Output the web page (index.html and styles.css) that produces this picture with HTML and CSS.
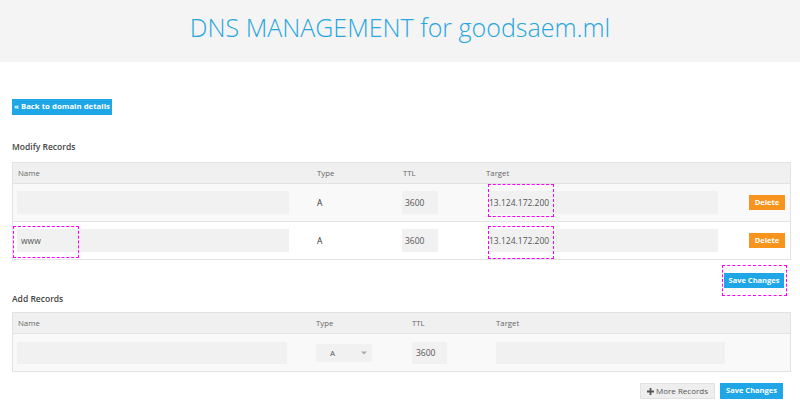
FILE: index.html
```html
<!DOCTYPE html>
<html>
<head>
<meta charset="utf-8">
<link rel="stylesheet" href="styles.css">
</head>
<body>
<header class="top">
  <h1 class="title">DNS MANAGEMENT for goodsaem.ml</h1>
</header>
<main class="main">
  <a class="btn btn-blue btn-back">« Back to domain details</a>

  <h2 class="section">Modify Records</h2>
  <div class="table t1">
    <div class="row head">
      <div class="cell">Name</div>
      <div class="cell">Type</div>
      <div class="cell">TTL</div>
      <div class="cell c-target">Target</div>
      <div class="cell"></div>
    </div>
    <div class="row odd">
      <div class="cell c-name"><span class="input in-name"></span></div>
      <div class="cell c-type">A</div>
      <div class="cell c-ttl"><span class="input in-ttl">3600</span></div>
      <div class="cell c-tin"><span class="input in-target">13.124.172.200</span><span class="mark mark-t1"></span></div>
      <div class="cell c-act"><a class="btn btn-orange">Delete</a></div>
    </div>
    <div class="row">
      <div class="cell c-name"><span class="input in-name">www</span><span class="mark mark-www"></span></div>
      <div class="cell c-type">A</div>
      <div class="cell c-ttl"><span class="input in-ttl">3600</span></div>
      <div class="cell c-tin"><span class="input in-target">13.124.172.200</span><span class="mark mark-t2"></span></div>
      <div class="cell c-act"><a class="btn btn-orange">Delete</a></div>
    </div>
  </div>
  <div class="save-row">
    <span class="save-wrap"><a class="btn btn-blue btn-save">Save Changes</a><span class="mark mark-save"></span></span>
  </div>

  <h2 class="section section-add">Add Records</h2>
  <div class="table t2">
    <div class="row head">
      <div class="cell">Name</div>
      <div class="cell">Type</div>
      <div class="cell">TTL</div>
      <div class="cell">Target</div>
    </div>
    <div class="row odd">
      <div class="cell c-name"><span class="input in-name2"></span></div>
      <div class="cell c-sel"><span class="select"><span>A</span><svg class="caret" width="6" height="4" viewBox="0 0 6 4"><path d="M0 0.5h6L3 3.5z" fill="#aaa"/></svg></span></div>
      <div class="cell c-ttl2"><span class="input in-ttl2">3600</span></div>
      <div class="cell c-ttl2"><span class="input in-target2"></span></div>
    </div>
  </div>
  <div class="bottom">
    <a class="btn btn-gray"><svg class="plus" width="7" height="7" viewBox="0 0 7 7"><path d="M2.6 0h1.8v2.6H7v1.8H4.4V7H2.6V4.4H0V2.6h2.6z" fill="#555"/></svg>More Records</a>
    <a class="btn btn-blue btn-save2">Save Changes</a>
  </div>
</main>
</body>
</html>
```

FILE: styles.css
```css
* { box-sizing: border-box; }
body {
  margin: 0;
  font-family: "Open Sans", "Liberation Sans", sans-serif;
  color: #444;
  background: #fff;
}
.top {
  height: 62px;
  background: #f4f4f4;
  display: flex;
  align-items: center;
  justify-content: center;
}
.title {
  margin: 0 0 8px;
  font-weight: 300;
  font-size: 25px;
  color: #27a6df;
  letter-spacing: 0;
}
.main {
  padding: 37px 9px 0 12px;
}
.btn {
  display: inline-flex;
  align-items: center;
  justify-content: center;
  font-size: 7.5px;
  font-weight: 700;
  color: #fff;
  line-height: 1;
  white-space: nowrap;
}
.btn-blue { background: #1ea6e6; }
.btn-orange { background: #f7941d; width: 36px; height: 15px; }
.btn-back { display: flex; width: 100px; height: 16px; font-size: 7.8px; }
.section {
  margin: 25px 0 8px;
  font-size: 8.5px;
  font-weight: 600;
  line-height: 14px;
  color: #444;
}
.section-add { margin: 4px 0 6px; }
.table {
  border: 1px solid #e3e3e3;
  width: 779px;
}
.row {
  display: grid;
  height: 38px;
  border-top: 1px solid #e3e3e3;
  align-items: center;
  background: #fff;
}
.row.head {
  height: 20px;
  border-top: 0;
  background: #f0f0f0;
  font-size: 7.8px;
  color: #666;
}
.row.odd { background: #f9f9f9; }
.t1 .row { grid-template-columns: 299px 86px 83px 240px 1fr; }
.t2 .row { grid-template-columns: 298px 96px 84px 1fr; }
.cell {
  padding-left: 5px;
  position: relative;
  height: 100%;
  display: flex;
  align-items: center;
}
.c-name { padding-left: 4px; }
.c-type { font-size: 8.5px; color: #333; }
.c-ttl { padding-left: 4px; }
.c-tin { padding-left: 7px; }
.c-act { justify-content: flex-end; padding-right: 5px; }
.input {
  display: flex;
  align-items: center;
  height: 23px;
  background: #f1f1f1;
  font-size: 8.5px;
  color: #555;
  padding-left: 4px;
}
.in-name { width: 272px; }
.in-ttl { width: 36px; padding-left: 3px; }
.in-target { width: 230px; padding-left: 1px; }
.in-name2 { width: 270px; height: 22px; }
.in-ttl2 { width: 35px; height: 22px; }
.in-target2 { width: 229px; height: 22px; }
.select {
  display: flex;
  align-items: center;
  width: 56px;
  height: 18px;
  background: #f1f1f1;
  font-size: 8px;
  color: #555;
  padding-left: 14px;
}
.caret { margin-left: 26px; }
.save-row {
  display: flex;
  justify-content: flex-end;
  padding-right: 7px;
  margin-top: 13px;
}
.save-wrap { position: relative; display: inline-flex; }
.btn-save { width: 60px; height: 15px; }
.mark {
  position: absolute;
  border: 1px dashed #ff00ff;
  pointer-events: none;
}
.mark-save { left: -2px; top: -8px; width: 65px; height: 31px; }
.mark-www { left: 0; top: 4px; width: 66px; height: 32px; }
.mark-t1 { left: 7px; top: 0; width: 66px; height: 33px; }
.mark-t2 { left: 7px; top: 4px; width: 66px; height: 33px; }
.bottom {
  display: flex;
  justify-content: flex-end;
  gap: 5px;
  margin-top: 11px;
  padding-right: 8px;
}
.btn-gray {
  background: #eee;
  border: 1px solid #e2e2e2;
  color: #555;
  font-weight: 400;
  font-size: 8px;
  width: 75px;
  height: 16px;
  gap: 2px;
}
.plus { margin-top: 0; }
.btn-save2 { width: 63px; height: 16px; }
```
